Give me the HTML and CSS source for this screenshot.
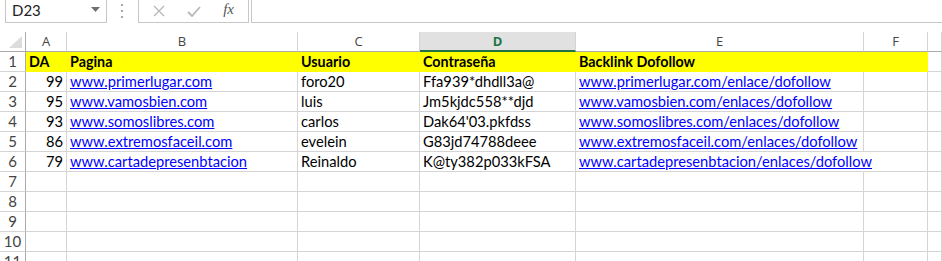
FILE: index.html
```html
<!DOCTYPE html>
<html lang="es">
<head>
  <meta charset="UTF-8" />
  <title>Libro1 - Excel</title>
  <link rel="stylesheet" href="styles.css">
</head>
<body>

  <div class="toolbar">
    <div class="namebox">
      <span>D23</span>
      <svg class="arrow" width="9" height="5" viewBox="0 0 9 5"><polygon points="0,0 9,0 4.5,5" fill="#707070"/></svg>
    </div>
    <svg class="grip" width="3" height="14" viewBox="0 0 3 14">
      <rect x="0" y="0" width="2" height="2" fill="#a6a6a6"/>
      <rect x="0" y="6" width="2" height="2" fill="#a6a6a6"/>
      <rect x="0" y="12" width="2" height="2" fill="#a6a6a6"/>
    </svg>
    <div class="fxbox">
      <svg width="12" height="12" viewBox="0 0 12 12"><path d="M1 1 L11 11 M11 1 L1 11" stroke="#b8b8b8" stroke-width="1.3" fill="none"/></svg>
      <svg width="14" height="11" viewBox="0 0 14 11"><path d="M1 6 L5 10 L13 1" stroke="#b8b8b8" stroke-width="1.8" fill="none"/></svg>
      <span class="fx">fx</span>
    </div>
    <div class="formula"></div>
  </div>

  <div class="sheet">
    <!-- encabezados de columna -->
    <div class="corner">
      <svg width="13" height="12" viewBox="0 0 13 12"><polygon points="13,0 13,12 0,12" fill="#dcdcdc"/></svg>
    </div>
    <div class="colhead">A</div>
    <div class="colhead">B</div>
    <div class="colhead">C</div>
    <div class="colhead active">D</div>
    <div class="colhead">E</div>
    <div class="colhead">F</div>
    <div class="colhead"></div>

    <!-- fila 1 -->
    <div class="rowhead">1</div>
    <div class="cell fill bold">DA</div>
    <div class="cell fill bold">Pagina</div>
    <div class="cell fill bold">Usuario</div>
    <div class="cell fill bold">Contraseña</div>
    <div class="cell fill bold">Backlink Dofollow</div>
    <div class="cell fill"></div>
    <div class="cell"></div>

    <div class="rowhead">2</div>
    <div class="cell num">99</div>
    <div class="cell"><a>www.primerlugar.com</a></div>
    <div class="cell">foro20</div>
    <div class="cell">Ffa939*dhdll3a@</div>
    <div class="cell"><a>www.primerlugar.com/enlace/dofollow</a></div>
    <div class="cell"></div>
    <div class="cell"></div>

    <div class="rowhead">3</div>
    <div class="cell num">95</div>
    <div class="cell"><a>www.vamosbien.com</a></div>
    <div class="cell">luis</div>
    <div class="cell">Jm5kjdc558**djd</div>
    <div class="cell"><a>www.vamosbien.com/enlaces/dofollow</a></div>
    <div class="cell"></div>
    <div class="cell"></div>

    <div class="rowhead">4</div>
    <div class="cell num">93</div>
    <div class="cell"><a>www.somoslibres.com</a></div>
    <div class="cell">carlos</div>
    <div class="cell">Dak64'03.pkfdss</div>
    <div class="cell"><a>www.somoslibres.com/enlaces/dofollow</a></div>
    <div class="cell"></div>
    <div class="cell"></div>

    <div class="rowhead">5</div>
    <div class="cell num">86</div>
    <div class="cell"><a>www.extremosfaceil.com</a></div>
    <div class="cell">evelein</div>
    <div class="cell">G83jd74788deee</div>
    <div class="cell"><a>www.extremosfaceil.com/enlaces/dofollow</a></div>
    <div class="cell"></div>
    <div class="cell"></div>

    <div class="rowhead">6</div>
    <div class="cell num">79</div>
    <div class="cell"><a>www.cartadepresenbtacion</a></div>
    <div class="cell">Reinaldo</div>
    <div class="cell">K@ty382p033kFSA</div>
    <div class="cell spill"><a>www.cartadepresenbtacion/enlaces/dofollow</a></div>
    <div class="cell"></div>
    <div class="cell"></div>

    <div class="rowhead">7</div>
    <div class="cell"></div><div class="cell"></div><div class="cell"></div><div class="cell"></div><div class="cell"></div><div class="cell"></div><div class="cell"></div>
    <div class="rowhead">8</div>
    <div class="cell"></div><div class="cell"></div><div class="cell"></div><div class="cell"></div><div class="cell"></div><div class="cell"></div><div class="cell"></div>
    <div class="rowhead">9</div>
    <div class="cell"></div><div class="cell"></div><div class="cell"></div><div class="cell"></div><div class="cell"></div><div class="cell"></div><div class="cell"></div>
    <div class="rowhead">10</div>
    <div class="cell"></div><div class="cell"></div><div class="cell"></div><div class="cell"></div><div class="cell"></div><div class="cell"></div><div class="cell"></div>
    <div class="rowhead">11</div>
    <div class="cell"></div><div class="cell"></div><div class="cell"></div><div class="cell"></div><div class="cell"></div><div class="cell"></div><div class="cell"></div>
  </div>

</body>
</html>
```

FILE: styles.css
```css
* {
  margin: 0; padding: 0; box-sizing: border-box;
}
body {
  font-family: Lato, "Open Sans", sans-serif;
  font-size: 14.7px;
  color: #000;
  background: #fff;
  overflow: hidden;
}

/* barra de formulas */
.toolbar {
  display: flex;
  align-items: flex-start;
  height: 23px;
  margin-top: -1px;
  margin-bottom: 10px;
}
.namebox {
  width: 102px;
  height: 24px;
  margin-left: 5px;
  border: 1px solid #c6c6c6;
  display: flex;
  align-items: center;
  justify-content: space-between;
  padding: 0 6px 2px 6px;
  font-size: 15px;
  color: #222;
}
.namebox .arrow {
  margin-top: -1px;
}
.grip {
  margin: 5px 14px 0 14px;
}
.fxbox {
  width: 111px;
  height: 24px;
  border: 1px solid #c6c6c6;
  display: flex;
  align-items: center;
  justify-content: space-between;
  padding: 0 14px 0 14px;
}
.fx {
  font-family: "Liberation Serif", serif;
  font-style: italic;
  font-size: 15px;
  color: #555;
  margin-top: -3px;
}
.formula {
  flex: 1;
  height: 24px;
  margin-left: 2px;
  margin-right: -2px;
  border: 1px solid #c6c6c6;
}

/* hoja */
.sheet {
  display: grid;
  grid-template-columns: 26px 41px 231px 122px 156px 288px 64px 1fr;
  grid-auto-rows: 20px;
}
.corner {
  border-right: 1px solid #ababab;
  border-bottom: 1px solid #ababab;
  display: flex;
  align-items: flex-end;
  justify-content: flex-end;
  padding: 0 3px 3px 0;
}
.colhead {
  border-right: 1px solid #d4d4d4;
  border-bottom: 1px solid #ababab;
  text-align: center;
  font-family: "Open Sans", sans-serif;
  font-size: 13px;
  line-height: 19px;
  color: #444;
}
.colhead.active {
  background: #e1e1e1;
  border-bottom: 2px solid #217346;
  color: #217346;
  font-weight: 700;
}
.rowhead {
  border-right: 1px solid #ababab;
  border-bottom: 1px solid #d4d4d4;
  text-align: center;
  font-size: 15px;
  line-height: 19px;
  color: #444;
}
.cell {
  border-right: 1px solid #d4d4d4;
  border-bottom: 1px solid #d4d4d4;
  padding: 0 3px;
  line-height: 19px;
  white-space: nowrap;
  overflow: hidden;
}
.cell a {
  color: #0000ff;
  text-decoration: underline;
}
.num {
  text-align: right;
}
.bold {
  font-weight: 700;
  font-size: 14.3px;
}
.fill {
  background: #ffff00;
  border-color: transparent;
}
.spill {
  overflow: visible;
  border-right-color: transparent;
  position: relative;
  z-index: 1;
}
```
